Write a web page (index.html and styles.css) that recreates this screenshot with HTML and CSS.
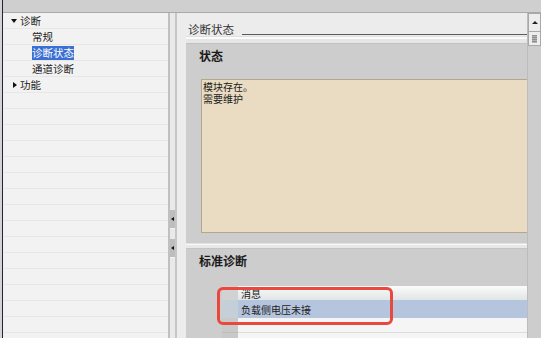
FILE: index.html
```html
<!DOCTYPE html>
<html lang="zh-CN">
<head>
    <meta charset="UTF-8">
    <title>诊断状态</title>
    <link rel="stylesheet" href="styles.css">
</head>
<body>

<div class="window">
    <div class="edge"></div>
    <div class="frame">
        <div class="topbar"></div>
        <div class="main">
            <div class="tree">
                <div class="node"><span class="caret down"></span><span>诊断</span></div>
                <div class="node child"><span>常规</span></div>
                <div class="node child"><span class="selected">诊断状态</span></div>
                <div class="node child"><span>通道诊断</span></div>
                <div class="node"><span class="caret right"></span><span>功能</span></div>
            </div>

            <div class="splitter">
                <div class="grip"><span class="arrow"></span></div>
                <div class="grip"><span class="arrow"></span></div>
            </div>

            <div class="content">
                <div class="page-title">
                    <span>诊断状态</span>
                    <div class="rule"></div>
                </div>
                <div class="divider"></div>

                <div class="section status">
                    <div class="section-title">状态</div>
                    <div class="status-box">模块存在。<br>需要维护</div>
                </div>
                <div class="divider thin"></div>

                <div class="section standard">
                    <div class="section-title">标准诊断</div>
                    <div class="grid">
                        <div class="row head"><div class="gutter"></div><div class="cell"><span>消息</span></div></div>
                        <div class="row picked"><div class="gutter"></div><div class="cell">负载侧电压未接</div></div>
                        <div class="row"><div class="gutter"></div><div class="cell"></div></div>
                        <div class="row"><div class="gutter"></div><div class="cell"></div></div>
                    </div>
                    <div class="mark"></div>
                </div>
            </div>

            <div class="vscroll">
                <div class="sbtn up"><span class="chev"></span></div>
                <div class="sbtn thumb"><span class="bars"></span></div>
            </div>
        </div>
    </div>
</div>

</body>
</html>
```

FILE: styles.css
```css
html, body {
    margin: 0;
    padding: 0;
}
body {
    width: 541px;
    height: 338px;
    overflow: hidden;
    font-family: "Noto Sans CJK SC", "Noto Sans", sans-serif;
    color: #222;
    background: #ececec;
}
.window {
    display: flex;
    height: 338px;
}
.edge {
    width: 2px;
    background: #d4d4d4;
    border-right: 1px solid #1e2730;
}
.frame {
    flex: 1;
    display: flex;
    flex-direction: column;
}
.topbar {
    height: 12px;
    flex-shrink: 0;
    background: #cfcfcf;
    border-bottom: 1px solid #a9a9a9;
}
.main {
    flex: 1;
    display: flex;
    min-height: 0;
}

/* navigation tree */
.tree {
    width: 165px;
    background: repeating-linear-gradient(to bottom, #f2f2f2 0 15px, #e7e7e7 15px 16px);
}
.node {
    height: 16px;
    display: flex;
    align-items: center;
    font-size: 10.5px;
    line-height: 14px;
}
.node.child {
    padding-left: 29px;
}
.caret {
    width: 17px;
    height: 16px;
    display: flex;
    align-items: center;
    justify-content: center;
}
.caret.down::before {
    content: "";
    border-left: 3px solid transparent;
    border-right: 3px solid transparent;
    border-top: 4px solid #111;
    margin-left: 5px;
}
.caret.right::before {
    content: "";
    border-top: 3.5px solid transparent;
    border-bottom: 3.5px solid transparent;
    border-left: 4px solid #111;
    margin-left: 7px;
}
.selected {
    background: #3b6fd3;
    color: #fff;
}

/* splitter between tree and page */
.splitter {
    width: 5px;
    background: #e9e9e9;
    border-left: 2px solid #c0c0c0;
    border-right: 2px solid #c6c6c6;
    display: flex;
    flex-direction: column;
    gap: 10px;
    padding-top: 197px;
}
.grip {
    height: 18px;
    background: #bdbdbd;
    border-bottom: 1px solid #f4f4f4;
    display: flex;
    align-items: center;
    justify-content: center;
}
.arrow {
    border-top: 2.5px solid transparent;
    border-bottom: 2.5px solid transparent;
    border-right: 3px solid #111;
}

/* page */
.content {
    flex: 1;
    padding-left: 9px;
    display: flex;
    flex-direction: column;
    overflow: hidden;
}
.content > * {
    flex-shrink: 0;
}
.page-title {
    height: 23px;
    display: flex;
    align-items: flex-end;
    padding-left: 2px;
    font-size: 11.5px;
    line-height: 13px;
    color: #333;
}
.rule {
    flex: 1;
    margin-left: 8px;
    margin-bottom: 1px;
    border-bottom: 1px solid #5a5a5a;
}
.divider {
    height: 8px;
    background: linear-gradient(#e0e0e0 0 1px, #fbfbfb 1px 3px, #e6e6e6 3px 7px, #c2c2c2 7px 8px);
}
.divider.thin {
    height: 6px;
    background: linear-gradient(#e2e2e2 0 1px, #f9f9f9 1px 2px, #e8e8e8 2px 5px, #c4c4c4 5px 6px);
}
.section {
    background: #cdcdcd;
}
.section-title {
    font-size: 12px;
    line-height: 14px;
    font-weight: bold;
    color: #1a1a1a;
}
.status {
    padding: 5px 0 10px 13px;
}
.status-box {
    margin-top: 16px;
    margin-left: 2px;
    height: 151px;
    background: #e9dcc3;
    border: 1px solid #b3a88f;
    border-right: none;
    padding: 1px 0 0 1px;
    font-size: 10px;
    line-height: 12px;
    color: #1a1a1a;
}
.standard {
    flex: 1 0 auto;
    position: relative;
    padding: 5px 0 0 13px;
}

/* message table */
.grid {
    margin-top: 18px;
    margin-left: 23px;
    font-size: 10px;
}
.row {
    display: flex;
    height: 15px;
}
.gutter {
    width: 16px;
    background: #c9c9c9;
    border-bottom: 1px solid #bdbdbd;
}
.cell {
    flex: 1;
    background: #f5f5f5;
    border-bottom: 1px solid #dcdcdc;
    padding-left: 3px;
    display: flex;
    align-items: center;
}
.row.head {
    height: 14px;
}
.row.head .gutter {
    background: #d2d2d2;
    border-bottom: none;
}
.row.head .cell {
    background: linear-gradient(#fbfbfb, #e0e5e5);
    border-bottom: none;
    align-items: flex-end;
    overflow: hidden;
}
.row.head .cell span {
    line-height: 10px;
    margin-bottom: 1px;
}
.row.picked {
    height: 18px;
}
.row.picked .gutter {
    background: #c4cfd8;
    border-bottom: none;
}
.row.picked .cell {
    background: #b5c5de;
    border-bottom: none;
}

/* red annotation */
.mark {
    position: absolute;
    left: 31px;
    top: 38px;
    width: 176px;
    height: 38px;
    box-sizing: border-box;
    border: 3px solid #e9483e;
    border-radius: 6px;
}

/* vertical scrollbar */
.vscroll {
    width: 13px;
    background: #cdcdcd;
    border-left: 1px solid #bcbcbc;
}
.sbtn {
    background: #ededed;
    border: 1px solid #a8a8a8;
    display: flex;
    align-items: center;
    justify-content: center;
}
.sbtn.up {
    height: 17px;
}
.sbtn.thumb {
    height: 13px;
    border-top: none;
}
.chev {
    border-left: 3px solid transparent;
    border-right: 3px solid transparent;
    border-bottom: 3px solid #222;
}
.bars {
    width: 5px;
    height: 8px;
    background: repeating-linear-gradient(#8e8e8e 0 1px, #b4b4b4 1px 2px);
}
```
